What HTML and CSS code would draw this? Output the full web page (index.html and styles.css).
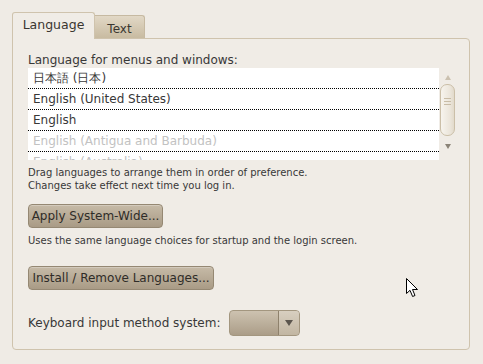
FILE: index.html
```html
<!DOCTYPE html>
<html lang="en">

<head>
    <meta charset="UTF-8">
    <title>Language Support</title>
    <link rel="stylesheet" href="styles.css">
</head>

<body>

    <div class="tabs">
        <div class="tab active">Language</div>
        <div class="tab">Text</div>
    </div>

    <div class="frame">
        <div class="label">Language for menus and windows:</div>

        <div class="list-wrap">
            <div class="list">
                <div class="row">日本語 (日本)</div>
                <div class="row">English (United States)</div>
                <div class="row">English</div>
                <div class="row off">English (Antigua and Barbuda)</div>
                <div class="row off">English (Australia)</div>
            </div>
            <div class="scrollbar">
                <span class="arrow up"></span>
                <div class="thumb">
                    <span class="grip"></span>
                </div>
                <span class="arrow down"></span>
            </div>
        </div>

        <div class="hint">Drag languages to arrange them in order of preference.<br>Changes take effect next time you log in.</div>

        <button class="btn apply-btn">Apply System-Wide...</button>

        <div class="hint uses">Uses the same language choices for startup and the login screen.</div>

        <button class="btn install-btn">Install / Remove Languages...</button>

        <div class="kbd-row">
            <span>Keyboard input method system:</span>
            <div class="combo">
                <div class="combo-value"></div>
                <div class="combo-arrow"><span class="arrow dark"></span></div>
            </div>
        </div>
    </div>

    <!-- mouse pointer -->
    <svg class="cursor" width="13" height="20" viewBox="0 0 13 20">
        <path d="M0.5 0.5 L0.5 15.5 L4 12.3 L6.6 18.5 L9 17.5 L6.5 11.5 L11.5 11.5 Z" fill="#fff" stroke="#000" stroke-width="1" stroke-linejoin="round"/>
    </svg>

</body>

</html>
```

FILE: styles.css
```css
body {
    font-family: "DejaVu Sans", sans-serif;
    font-size: 12px;
    color: #383838;
    background-color: #efebe5;
    margin: 0;
    padding: 12px 13px 0 12px;
    position: relative;
    height: 352px;
    overflow: hidden;
}

.tabs {
    display: flex;
    align-items: flex-end;
    height: 26px;
}

.tab {
    box-sizing: border-box;
    height: 23px;
    width: 50px;
    text-align: center;
    line-height: 23px;
    padding-top: 2px;
    border: 1px solid #c6b9a1;
    border-bottom: none;
    border-left: none;
    border-radius: 0 3px 0 0;
    background: linear-gradient(#e2d8c6, #c8bba1);
    color: #3a3630;
}

.tab.active {
    width: 83px;
    height: 27px;
    line-height: 24px;
    padding-top: 0;
    border-left: 1px solid #cfc3ad;
    border-color: #cfc3ad;
    border-radius: 3px 3px 0 0;
    background: #f0ece6;
    position: relative;
    z-index: 1;
    margin-bottom: -1px;
    font-size: 12.5px;
}

.frame {
    border: 1px solid #cfc3ad;
    border-radius: 0 4px 4px 4px;
    background: #f0ece6;
    padding: 14px 14px 13px 15px;
    display: flex;
    flex-direction: column;
    align-items: flex-start;
}

.label {
    line-height: 15px;
}

.list-wrap {
    display: flex;
    width: 100%;
}

.list {
    width: 411px;
    height: 92px;
    overflow: hidden;
    background: #fff;
}

.row {
    height: 20px;
    line-height: 20px;
    padding-left: 5px;
    border-bottom: 1px dotted #000;
}

.row.off {
    color: #c2c2c2;
}

.scrollbar {
    width: 16px;
    display: flex;
    flex-direction: column;
    align-items: center;
    padding-top: 7px;
}

.arrow {
    width: 0;
    height: 0;
    border-left: 3px solid transparent;
    border-right: 3px solid transparent;
}

.arrow.up {
    border-bottom: 5px solid #cbc1b0;
    margin-left: 2px;
}

.arrow.down {
    border-top: 5px solid #8b8478;
    margin-top: 8px;
    margin-left: 2px;
}

.thumb {
    box-sizing: border-box;
    width: 15px;
    height: 52px;
    margin-top: 4px;
    border: 1px solid #cbbfa8;
    border-radius: 7px;
    background: linear-gradient(90deg, #f7f4ee, #ebe5da 70%, #e2dacb);
    display: flex;
    justify-content: center;
    padding-top: 13px;
}

.grip {
    width: 7px;
    height: 5px;
    border-top: 1px solid #c8bca6;
    border-bottom: 1px solid #c8bca6;
    position: relative;
}

.grip::after {
    content: "";
    position: absolute;
    left: 0;
    right: 0;
    top: 2px;
    border-top: 1px solid #c8bca6;
}

.hint {
    font-size: 10px;
    line-height: 13px;
    margin-top: 6px;
}

.btn {
    font-family: "DejaVu Sans", sans-serif;
    font-size: 12px;
    color: #2f2c28;
    height: 24px;
    padding: 0 2px;
    white-space: nowrap;
    border: 1px solid #958873;
    border-radius: 4px;
    background: linear-gradient(#c6baa7, #a99b86);
    box-shadow: inset 0 1px 0 rgba(255, 255, 255, 0.25);
}

.apply-btn {
    width: 135px;
    margin-top: 12px;
}

.uses {
    margin-top: 6px;
}

.install-btn {
    width: 186px;
    margin-top: 19px;
}

.kbd-row {
    display: flex;
    align-items: center;
    gap: 8px;
    margin-top: 20px;
}

.combo {
    display: flex;
    box-sizing: border-box;
    width: 71px;
    height: 26px;
    border: 1px solid #a3967f;
    border-radius: 4px;
    background: linear-gradient(#cdc2b0, #ab9d88);
    overflow: hidden;
}

.combo-value {
    width: 48px;
    border-right: 1px solid #8e816c;
}

.combo-arrow {
    flex: 1;
    display: flex;
    align-items: center;
    justify-content: center;
    background: linear-gradient(#d8cfc0, #c2b6a2);
}

.arrow.dark {
    border-top: 6px solid #5c564e;
    border-left-width: 4px;
    border-right-width: 4px;
}

.cursor {
    position: absolute;
    left: 406px;
    top: 278px;
}
```
